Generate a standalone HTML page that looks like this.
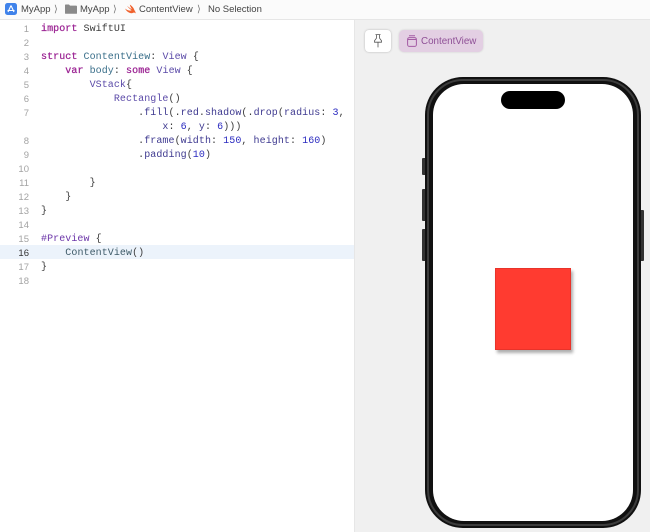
<!DOCTYPE html>
<html>
<head>
<meta charset="utf-8">
<style>
html,body{margin:0;padding:0;background:#fff;}
#root{position:relative;width:650px;height:532px;overflow:hidden;background:#fff;font-family:"Liberation Sans",sans-serif;filter:blur(.3px);}
.abs{position:absolute;}
.crumb{position:absolute;top:4px;font-size:9.5px;line-height:12px;color:#444;white-space:nowrap;}
.num{position:absolute;left:0;width:29px;margin-top:1px;text-align:right;font-family:"Liberation Sans",sans-serif;font-size:9.5px;line-height:14px;color:#a3a3a3;}
.ln{position:absolute;left:41px;margin-top:1px;font-family:"Liberation Mono",monospace;font-size:10px;letter-spacing:.07px;line-height:14px;color:#3c3c3c;white-space:pre;}
.k{color:#9b2393;-webkit-text-stroke:.25px #9b2393;}
.t{color:#3a6f8a;}
.y{color:#5b4aa8;}
.f{color:#3f3a90;}
.m{color:#2a2ac0;}
.p{color:#6c36a9;}
.s{color:#3d5a68;}
</style>
</head>
<body>
<div id="root">
  <div class="abs" style="left:0;top:0;width:650px;height:19px;background:#fbfbfb;"></div>
  <div class="abs" style="left:0;top:19px;width:650px;height:1px;background:#e6e6e6;"></div>

  <svg class="abs" style="left:5px;top:3px" width="12" height="12" viewBox="0 0 12 12"><rect width="12" height="12" rx="2.5" fill="#3f82ea"/><path d="M6 2.5L3 9M6 2.5L9 9M2.5 7.5H9.5" stroke="#fff" stroke-width="1.1" fill="none"/></svg>
  <div class="crumb" style="left:21px">MyApp</div>
  <div class="crumb" style="left:54px;color:#777">⟩</div>
  <svg class="abs" style="left:65px;top:4px" width="12" height="10" viewBox="0 0 12 10"><path d="M0 1.2Q0 .5 .8 .5H4L5 1.6H11.2Q12 1.6 12 2.4V9.2Q12 9.8 11.2 9.8H.8Q0 9.8 0 9.2Z" fill="#8a8a8a"/></svg>
  <div class="crumb" style="left:80px">MyApp</div>
  <div class="crumb" style="left:113px;color:#777">⟩</div>
  <svg class="abs" style="left:125px;top:4px" width="11" height="10" viewBox="0 0 11 10"><path d="M0 4.5C2.5 6.5 5 7 6.5 6.3C4.5 4.8 3 3.2 2 1.8C4 3.6 6 4.8 7 5.2C5.8 3.6 5 2 4.8 .5C6.8 2 8.8 3.8 9.2 5.8C9.5 6.6 10.5 7.5 10.8 9.6C10 8.5 9 8.4 8.2 8.8C6 9.9 2.5 9 0 4.5Z" fill="#f0622e"/></svg>
  <div class="crumb" style="left:139px">ContentView</div>
  <div class="crumb" style="left:197px;color:#777">⟩</div>
  <div class="crumb" style="left:208px">No Selection</div>

  <div class="abs" style="left:0;top:245px;width:354px;height:14px;background:#ecf3fb;"></div>

  <div class="num" style="top:22px">1</div>
  <div class="num" style="top:36px">2</div>
  <div class="num" style="top:50px">3</div>
  <div class="num" style="top:64px">4</div>
  <div class="num" style="top:78px">5</div>
  <div class="num" style="top:92px">6</div>
  <div class="num" style="top:106px">7</div>
  <div class="num" style="top:134px">8</div>
  <div class="num" style="top:148px">9</div>
  <div class="num" style="top:162px">10</div>
  <div class="num" style="top:176px">11</div>
  <div class="num" style="top:190px">12</div>
  <div class="num" style="top:204px">13</div>
  <div class="num" style="top:218px">14</div>
  <div class="num" style="top:232px">15</div>
  <div class="num" style="top:246px;color:#333">16</div>
  <div class="num" style="top:260px">17</div>
  <div class="num" style="top:274px">18</div>

  <div class="ln" style="top:22px"><span class="k">import</span> SwiftUI</div>
  <div class="ln" style="top:50px"><span class="k">struct</span> <span class="t">ContentView</span>: <span class="y">View</span> {</div>
  <div class="ln" style="top:64px">    <span class="k">var</span> <span class="t">body</span>: <span class="k">some</span> <span class="y">View</span> {</div>
  <div class="ln" style="top:78px">        <span class="y">VStack</span>{</div>
  <div class="ln" style="top:92px">            <span class="y">Rectangle</span>()</div>
  <div class="ln" style="top:106px">                .<span class="f">fill</span>(.<span class="f">red</span>.<span class="f">shadow</span>(.<span class="f">drop</span>(<span class="f">radius</span>: <span class="m">3</span>,</div>
  <div class="ln" style="top:120px">                    <span class="f">x</span>: <span class="m">6</span>, <span class="f">y</span>: <span class="m">6</span>)))</div>
  <div class="ln" style="top:134px">                .<span class="f">frame</span>(<span class="f">width</span>: <span class="m">150</span>, <span class="f">height</span>: <span class="m">160</span>)</div>
  <div class="ln" style="top:148px">                .<span class="f">padding</span>(<span class="m">10</span>)</div>
  <div class="ln" style="top:176px">        }</div>
  <div class="ln" style="top:190px">    }</div>
  <div class="ln" style="top:204px">}</div>
  <div class="ln" style="top:232px"><span class="p">#Preview</span> {</div>
  <div class="ln" style="top:246px">    <span class="s">ContentView</span>()</div>
  <div class="ln" style="top:260px">}</div>

  <div class="abs" style="left:354px;top:20px;width:296px;height:512px;background:#f0f0f0;border-left:1px solid #e6e6e6;box-sizing:border-box;"></div>

  <div class="abs" style="left:365px;top:30px;width:26px;height:22px;background:#fff;border-radius:4px;box-shadow:0 0 2px rgba(0,0,0,.25);"></div>
  <svg class="abs" style="left:373px;top:34px" width="10" height="14" viewBox="0 0 10 14"><path d="M2.5 .6H7.5M3.4 .6V4.2L1.5 6.8V8.2H8.5V6.8L6.6 4.2V.6M5 8.2V13.4" stroke="#555" stroke-width=".8" fill="none"/></svg>

  <div class="abs" style="left:399px;top:30px;width:84px;height:22px;background:#e3cfe3;border-radius:5px;box-shadow:0 0 2px rgba(0,0,0,.15);"></div>
  <svg class="abs" style="left:407px;top:35px" width="10" height="12" viewBox="0 0 10 12"><rect x=".6" y="2.6" width="8.8" height="8.8" rx="1.8" fill="none" stroke="#a45ba4" stroke-width="1"/><path d="M2 .8H8M.8 4.5H9.2" stroke="#a45ba4" stroke-width="1" fill="none"/></svg>
  <div class="abs" style="left:421px;top:36px;font-size:9.8px;line-height:12px;color:#8e4f96;white-space:nowrap;">ContentView</div>

  <div class="abs" style="left:422px;top:158px;width:3px;height:17px;background:#333;border-radius:1px 0 0 1px;"></div>
  <div class="abs" style="left:422px;top:189px;width:3px;height:32px;background:#333;border-radius:1px 0 0 1px;"></div>
  <div class="abs" style="left:422px;top:229px;width:3px;height:32px;background:#333;border-radius:1px 0 0 1px;"></div>
  <div class="abs" style="left:641px;top:210px;width:3px;height:51px;background:#333;border-radius:0 1px 1px 0;"></div>

  <div class="abs" style="left:425px;top:77px;width:216px;height:451px;box-sizing:border-box;background:#111;border-radius:38px;"></div>
  <div class="abs" style="left:427px;top:79px;width:212px;height:447px;box-sizing:border-box;border:2px solid #3c3c3c;border-radius:36px;"></div>
  <div class="abs" style="left:433px;top:84px;width:200px;height:437px;background:#fff;border-radius:31px;"></div>
  <div class="abs" style="left:501px;top:91px;width:64px;height:18px;background:#000;border-radius:9px;"></div>

  <div class="abs" style="left:495px;top:268px;width:76px;height:82px;box-sizing:border-box;background:#ff3b30;border:1px solid #e8332a;box-shadow:2px 3px 3px rgba(0,0,0,.32);"></div>
</div>
</body>
</html>
